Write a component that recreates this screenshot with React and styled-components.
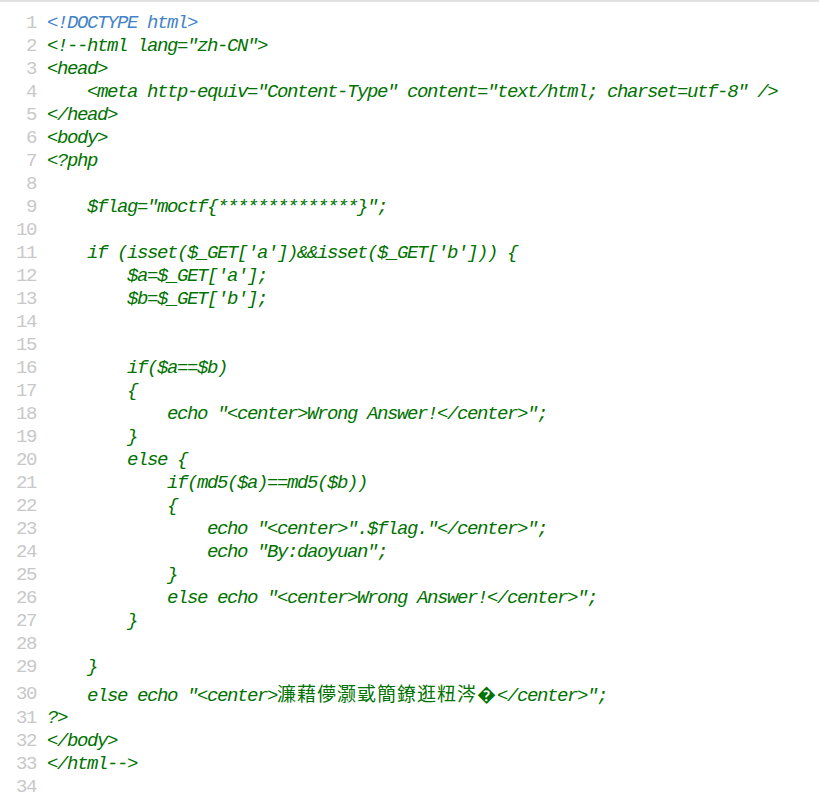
import styled, { createGlobalStyle } from "styled-components";

const GlobalStyle = createGlobalStyle`
  html, body {
    margin: 0;
    padding: 0;
    background: #ffffff;
  }
`;

const lines = [
  { text: "<!DOCTYPE html>", tone: "blue" },
  { text: '<!--html lang="zh-CN">' },
  { text: "<head>" },
  { text: '    <meta http-equiv="Content-Type" content="text/html; charset=utf-8" />' },
  { text: "</head>" },
  { text: "<body>" },
  { text: "<?php" },
  { text: "" },
  { text: '    $flag="moctf{**************}";' },
  { text: "" },
  { text: "    if (isset($_GET['a'])&&isset($_GET['b'])) {" },
  { text: "        $a=$_GET['a'];" },
  { text: "        $b=$_GET['b'];" },
  { text: "" },
  { text: "" },
  { text: "        if($a==$b)" },
  { text: "        {" },
  { text: '            echo "<center>Wrong Answer!</center>";' },
  { text: "        }" },
  { text: "        else {" },
  { text: "            if(md5($a)==md5($b))" },
  { text: "            {" },
  { text: '                echo "<center>".$flag."</center>";' },
  { text: '                echo "By:daoyuan";' },
  { text: "            }" },
  { text: '            else echo "<center>Wrong Answer!</center>";' },
  { text: "        }" },
  { text: "" },
  { text: "    }" },
  {
    text: '    else echo "<center>',
    cjk: "濂藉儚灏戜簡鐐逛粈涔\uFFFD",
    tail: '</center>";',
    tall: true,
  },
  { text: "?>" },
  { text: "</body>" },
  { text: "</html-->" },
  { text: "" },
];

export default function App() {
  return (
    <>
      <GlobalStyle />
      <S.Editor>
        {lines.map((line, index) => (
          <S.Row key={index} $tall={line.tall}>
            <S.Number>{index + 1}</S.Number>
            <S.Code $tone={line.tone}>
              {line.text}
              {line.cjk && <S.Cjk>{line.cjk}</S.Cjk>}
              {line.tail}
            </S.Code>
          </S.Row>
        ))}
      </S.Editor>
    </>
  );
}

const S = {
  Editor: styled.div`
    border-top: 2px solid #e2e2e2;
    padding: 10px 0 10px;
    min-height: 787px;
    box-sizing: border-box;
    overflow: hidden;
  `,
  Row: styled.div`
    display: grid;
    grid-template-columns: 36px 1fr;
    column-gap: 11px;
    align-items: center;
    height: ${(p) => (p.$tall ? "28px" : "23px")};
    padding-top: ${(p) => (p.$tall ? "2px" : "0")};
    box-sizing: border-box;
  `,
  Number: styled.span`
    text-align: right;
    font-family: "Liberation Mono", "DejaVu Sans Mono", monospace;
    font-size: 19px;
    letter-spacing: -1.4px;
    color: #c8c8c8;
    line-height: 23px;
  `,
  Code: styled.span`
    white-space: pre;
    font-family: "Liberation Mono", "DejaVu Sans Mono", monospace;
    font-style: italic;
    font-size: 19px;
    letter-spacing: -1.4px;
    line-height: 23px;
    color: ${(p) => (p.$tone === "blue" ? "#4383c9" : "#007200")};
  `,
  Cjk: styled.span`
    font-family: "Noto Sans CJK SC", "Noto Sans CJK TC", sans-serif;
    font-style: normal;
    font-size: 19px;
    letter-spacing: 1px;
  `,
};
